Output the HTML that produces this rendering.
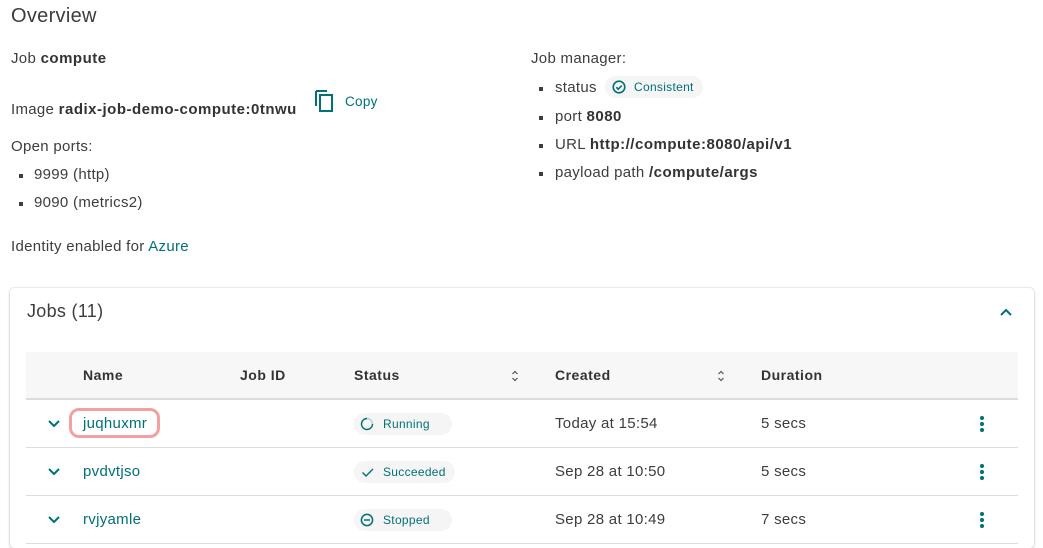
<!DOCTYPE html>
<html><head><meta charset="utf-8"><style>
*{margin:0;padding:0;box-sizing:border-box}
body{width:1043px;height:540px;overflow:hidden;background:#fff;font-family:"Liberation Sans",sans-serif;color:#3d3d3d;position:relative}
.a{position:absolute;white-space:nowrap}
b{font-weight:bold;color:#333;letter-spacing:0.5px}
.t{font-size:15px;letter-spacing:0.3px}
.bul{position:absolute;width:4px;height:4px;background:#3d3d3d}
.teal{color:#007079}
.card{position:absolute;left:10px;top:288px;width:1024px;height:260px;border-radius:4px;box-shadow:0 0 1px rgba(0,0,0,.3),0 1px 3px rgba(0,0,0,.18);background:#fff}
.hdr{position:absolute;left:26px;top:352px;width:992px;height:48px;background:#f7f7f7;border-bottom:2px solid #dcdcdc}
.row{position:absolute;left:26px;width:992px;height:48px;border-bottom:1px solid #dcdcdc}
.th{font-size:14px;font-weight:bold;color:#333;top:367px;letter-spacing:0.5px}
.chip{position:absolute;height:22px;border-radius:11px;background:#f5f5f5;font-size:12px;color:#007079;line-height:22px;padding-left:29px;letter-spacing:0.3px}
.dots{position:absolute;left:980px;width:4px}
.dots i{display:block;width:4px;height:4px;border-radius:2px;background:#007079;margin-bottom:2px}
</style></head><body>
<div class="a" style="left:11px;top:5px;font-size:20px;color:#3d3d3d;letter-spacing:0.3px">Overview</div>
<div class="a t" style="left:11px;top:50px">Job <b>compute</b></div>
<div class="a t" style="left:11px;top:101px">Image <b>radix-job-demo-compute:0tnwu</b></div>
<svg class="a" style="left:314px;top:90px" width="22" height="24" viewBox="0 0 22 24"><path d="M2 1h11M2 1v15" stroke="#007079" stroke-width="2" fill="none"/><rect x="6" y="5" width="12" height="16" fill="none" stroke="#007079" stroke-width="2"/></svg>
<div class="a teal" style="left:345px;top:94px;font-size:13.5px;letter-spacing:0.3px">Copy</div>
<div class="a t" style="left:11px;top:138px">Open ports:</div>
<div class="bul" style="left:19px;top:174px"></div><div class="a t" style="left:34px;top:166px">9999 (http)</div>
<div class="bul" style="left:19px;top:202px"></div><div class="a t" style="left:34px;top:194px">9090 (metrics2)</div>
<div class="a t" style="left:11px;top:238px">Identity enabled for <span class="teal">Azure</span></div>

<div class="a t" style="left:531px;top:50px">Job manager:</div>
<div class="bul" style="left:539px;top:87px"></div><div class="a t" style="left:555px;top:79px">status</div>
<div class="chip" style="left:605px;top:76px;width:98px">Consistent
<svg style="position:absolute;left:7px;top:4px" width="14" height="14" viewBox="0 0 14 14"><circle cx="7" cy="7" r="5.8" fill="none" stroke="#007079" stroke-width="1.6"/><path d="M4.3 7.2l2 2 3.5-3.7" fill="none" stroke="#007079" stroke-width="1.6"/></svg></div>
<div class="bul" style="left:539px;top:116px"></div><div class="a t" style="left:555px;top:108px">port <b>8080</b></div>
<div class="bul" style="left:539px;top:144px"></div><div class="a t" style="left:555px;top:136px">URL <b>http://compute:8080/api/v1</b></div>
<div class="bul" style="left:539px;top:172px"></div><div class="a t" style="left:555px;top:164px">payload path <b>/compute/args</b></div>

<div class="card"></div>
<div class="a" style="left:27px;top:301px;font-size:18px;color:#3d3d3d;letter-spacing:0.3px">Jobs (11)</div>
<svg class="a" style="left:999px;top:307px" width="14" height="10" viewBox="0 0 14 10"><path d="M2 8l5-5 5 5" fill="none" stroke="#007079" stroke-width="2"/></svg>
<div class="hdr"></div>
<div class="a th" style="left:83px">Name</div>
<div class="a th" style="left:240px">Job ID</div>
<div class="a th" style="left:354px">Status</div>
<div class="a th" style="left:555px">Created</div>
<div class="a th" style="left:761px">Duration</div>
<svg class="a" style="left:511px;top:369px" width="8" height="14" viewBox="0 0 8 14"><path d="M1.5 5L4 2.5 6.5 5M1.5 9L4 11.5 6.5 9" fill="none" stroke="#555" stroke-width="1.2"/></svg>
<svg class="a" style="left:717px;top:369px" width="8" height="14" viewBox="0 0 8 14"><path d="M1.5 5L4 2.5 6.5 5M1.5 9L4 11.5 6.5 9" fill="none" stroke="#555" stroke-width="1.2"/></svg>

<div class="row" style="top:400px"></div>
<div class="row" style="top:448px"></div>
<div class="row" style="top:496px"></div>

<svg class="a" style="left:47px;top:419px" width="14" height="10" viewBox="0 0 14 10"><path d="M2 2l5 5 5-5" fill="none" stroke="#007079" stroke-width="2"/></svg>
<svg class="a" style="left:47px;top:467px" width="14" height="10" viewBox="0 0 14 10"><path d="M2 2l5 5 5-5" fill="none" stroke="#007079" stroke-width="2"/></svg>
<svg class="a" style="left:47px;top:515px" width="14" height="10" viewBox="0 0 14 10"><path d="M2 2l5 5 5-5" fill="none" stroke="#007079" stroke-width="2"/></svg>

<div class="a" style="left:69px;top:408px;width:91px;height:30px;border:3px solid #f2a0a0;border-radius:10px"></div>
<div class="a teal t" style="left:83px;top:415px">juqhuxmr</div>
<div class="a teal t" style="left:83px;top:463px">pvdvtjso</div>
<div class="a teal t" style="left:83px;top:511px">rvjyamle</div>

<div class="chip" style="left:354px;top:413px;width:98px">Running
<svg style="position:absolute;left:6px;top:4px" width="14" height="14" viewBox="0 0 14 14"><path d="M7 1.5A5.5 5.5 0 1 0 12.5 7" fill="none" stroke="#007079" stroke-width="1.4"/><path d="M12.5 7A5.5 5.5 0 0 0 7 1.5" fill="none" stroke="#bcd" stroke-width="1.4"/></svg></div>
<div class="chip" style="left:354px;top:461px;width:101px">Succeeded
<svg style="position:absolute;left:7px;top:5px" width="14" height="12" viewBox="0 0 14 12"><path d="M1.5 6.5l3.5 3.5 7-7" fill="none" stroke="#007079" stroke-width="1.4"/></svg></div>
<div class="chip" style="left:354px;top:509px;width:98px">Stopped
<svg style="position:absolute;left:6px;top:4px" width="14" height="14" viewBox="0 0 14 14"><circle cx="7" cy="7" r="5.6" fill="none" stroke="#007079" stroke-width="1.5"/><path d="M4 7h6" stroke="#007079" stroke-width="1.5"/></svg></div>

<div class="a t" style="left:555px;top:415px">Today at 15:54</div>
<div class="a t" style="left:555px;top:463px">Sep 28 at 10:50</div>
<div class="a t" style="left:555px;top:511px">Sep 28 at 10:49</div>
<div class="a t" style="left:761px;top:415px">5 secs</div>
<div class="a t" style="left:761px;top:463px">5 secs</div>
<div class="a t" style="left:761px;top:511px">7 secs</div>

<div class="dots" style="top:416px"><i></i><i></i><i></i></div>
<div class="dots" style="top:464px"><i></i><i></i><i></i></div>
<div class="dots" style="top:512px"><i></i><i></i><i></i></div>
</body></html>
